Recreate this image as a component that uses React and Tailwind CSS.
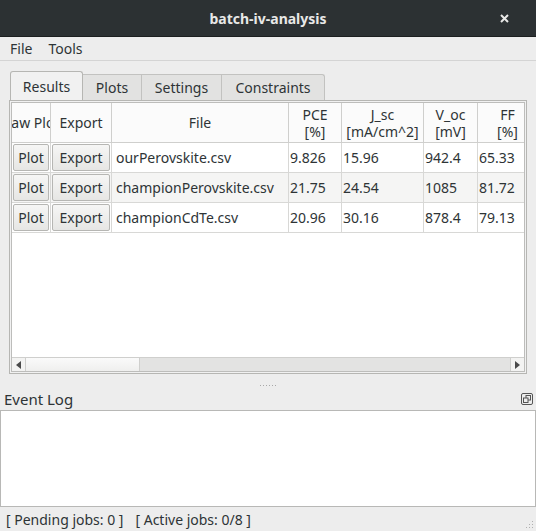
import React from 'react';

const rows = [
    { file: 'ourPerovskite.csv', pce: '9.826', jsc: '15.96', voc: '942.4', ff: '65.33' },
    { file: 'championPerovskite.csv', pce: '21.75', jsc: '24.54', voc: '1085', ff: '81.72' },
    { file: 'championCdTe.csv', pce: '20.96', jsc: '30.16', voc: '878.4', ff: '79.13' },
];

const cols = [39, 61, 177, 53, 82, 54, 60];

function Btn({ children }) {
    return (
        <div className="h-full w-full p-[1px]">
            <div className="h-full w-full flex items-center justify-center border border-[#b6b6b3] rounded-[2px] bg-gradient-to-b from-[#f6f6f5] to-[#e6e6e4]">
                {children}
            </div>
        </div>
    );
}

export default function App() {
    return (
        <div className="w-[536px] h-[531px] bg-[#ededed] flex flex-col text-[#2e3436] text-[14px] overflow-hidden" style={{ fontFamily: '"Noto Sans", "DejaVu Sans", sans-serif' }}>
            {/* Title bar */}
            <div className="h-[37px] shrink-0 bg-[#2c3133] border-b border-[#1c1f20] relative flex items-center justify-center">
                <span className="text-[#e8e8e7] font-bold text-[14px]">batch-iv-analysis</span>
                <svg className="absolute right-[27px] top-[14px]" width="9" height="9" viewBox="0 0 9 9">
                    <path d="M1 1 L8 8 M8 1 L1 8" stroke="#e8e8e7" strokeWidth="2" />
                </svg>
            </div>

            {/* Menu */}
            <div className="h-[24px] shrink-0 flex items-center gap-[16px] px-[10px] border-b border-[#d4d4d4]">
                <span>File</span>
                <span>Tools</span>
            </div>

            {/* Tabs */}
            <div className="px-[9px] pt-[10px] shrink-0">
                <div className="flex items-end h-[29px] pl-[1px]">
                    <div className="h-[29px] w-[73px] flex items-center justify-center border border-b-0 border-[#b6b6b3] rounded-t-[3px] bg-[#f1f1f1]">Results</div>
                    <div className="h-[26px] w-[59px] flex items-center justify-center border border-l-0 border-b-0 border-[#c2c2c0] bg-[#e2e2e1]">Plots</div>
                    <div className="h-[26px] w-[80px] flex items-center justify-center border border-l-0 border-b-0 border-[#c2c2c0] bg-[#e2e2e1]">Settings</div>
                    <div className="h-[26px] w-[103px] flex items-center justify-center border border-l-0 border-b-0 border-[#c2c2c0] rounded-tr-[3px] bg-[#e2e2e1]">Constraints</div>
                </div>
                <div className="h-[274px] border border-[#b6b6b3] bg-[#f1f1f1] p-[1px]">
                    <div className="h-full border border-[#bdbdbb] bg-white flex flex-col">
                        <div className="flex-1 overflow-hidden">
                            <div className="flex h-[40px] border-b border-[#cfcfcd]">
                                {['Raw Plot', 'Export', 'File'].map((h, i) => (
                                    <div key={h} className="shrink-0 flex items-center justify-center overflow-hidden whitespace-nowrap border-r border-[#cfcfcd] bg-[#fbfbfb]" style={{ width: cols[i] }}>
                                        <span className="shrink-0">{h}</span>
                                    </div>
                                ))}
                                {[['PCE', '[%]'], ['J_sc', '[mA/cm^2]'], ['V_oc', '[mV]'], ['FF', '[%]']].map((h, i) => (
                                    <div key={h[0]} className="shrink-0 flex flex-col items-center justify-center leading-[17px] border-r border-[#cfcfcd] bg-[#fbfbfb]" style={{ width: cols[i + 3] }}>
                                        <span>{h[0]}</span>
                                        <span>{h[1]}</span>
                                    </div>
                                ))}
                            </div>
                            {rows.map((r, idx) => (
                                <div key={r.file} className={`flex h-[30px] border-b border-[#d8d8d6] ${idx === 1 ? 'bg-[#f5f5f4]' : 'bg-white'}`}>
                                    <div className="shrink-0 border-r border-[#d8d8d6]" style={{ width: cols[0] }}><Btn>Plot</Btn></div>
                                    <div className="shrink-0 border-r border-[#d8d8d6]" style={{ width: cols[1] }}><Btn>Export</Btn></div>
                                    <div className="shrink-0 flex items-center pl-[4px] whitespace-nowrap overflow-hidden border-r border-[#d8d8d6]" style={{ width: cols[2] }}>{r.file}</div>
                                    {[r.pce, r.jsc, r.voc, r.ff].map((v, i) => (
                                        <div key={i} className="shrink-0 flex items-center pl-[1px] border-r border-[#d8d8d6]" style={{ width: cols[i + 3] }}>{v}</div>
                                    ))}
                                </div>
                            ))}
                        </div>
                        {/* Horizontal scrollbar */}
                        <div className="h-[14px] flex border-t border-[#cfcfcd] bg-[#e3e3e2]">
                            <div className="w-[14px] flex items-center justify-center bg-[#f3f3f2] border-r border-[#cfcfcd]">
                                <svg width="5" height="8" viewBox="0 0 5 8"><path d="M5 0 L0 4 L5 8 Z" fill="#4a4a4a" /></svg>
                            </div>
                            <div className="w-[114px] bg-gradient-to-b from-[#fafafa] to-[#efefee] border-r border-[#cfcfcd]" />
                            <div className="flex-1" />
                            <div className="w-[14px] flex items-center justify-center bg-[#f3f3f2] border-l border-[#cfcfcd]">
                                <svg width="5" height="8" viewBox="0 0 5 8"><path d="M0 0 L5 4 L0 8 Z" fill="#4a4a4a" /></svg>
                            </div>
                        </div>
                    </div>
                </div>
            </div>

            {/* Splitter */}
            <div className="h-[17px] shrink-0 flex items-start justify-center pt-[11px]">
                <div className="flex gap-[2px]">
                    {[0, 1, 2, 3, 4, 5].map((i) => (
                        <div key={i} className="w-[1px] h-[1px] bg-[#a8a8a8]" />
                    ))}
                </div>
            </div>

            {/* Event log */}
            <div className="h-[19px] shrink-0 flex items-start justify-between pl-[4px] pr-[3px]">
                <span className="text-[15px] leading-[16px]">Event Log</span>
                <svg className="mt-[2px]" width="12" height="12" viewBox="0 0 12 12">
                    <rect x="0.5" y="0.5" width="11" height="11" rx="1.5" fill="none" stroke="#555" />
                    <rect x="5" y="2.5" width="4.5" height="4.5" fill="none" stroke="#555" />
                    <rect x="2.5" y="5" width="4.5" height="4.5" fill="#ededed" stroke="#555" />
                </svg>
            </div>
            <div className="h-[97px] shrink-0 bg-white border border-[#b8b8b6]" />

            {/* Status bar */}
            <div className="flex-1 flex items-center px-[6px] relative">
                <span>[ Pending jobs: 0 ]</span>
                <span className="ml-[12px]">[ Active jobs: 0/8 ]</span>
                <svg className="absolute right-[2px] bottom-[2px]" width="10" height="10" viewBox="0 0 10 10">
                    {[[8, 2], [5, 5], [8, 5], [2, 8], [5, 8], [8, 8]].map(([x, y]) => (
                        <rect key={`${x}-${y}`} x={x} y={y} width="1" height="1" fill="#b0b0b0" />
                    ))}
                </svg>
            </div>
        </div>
    );
}
